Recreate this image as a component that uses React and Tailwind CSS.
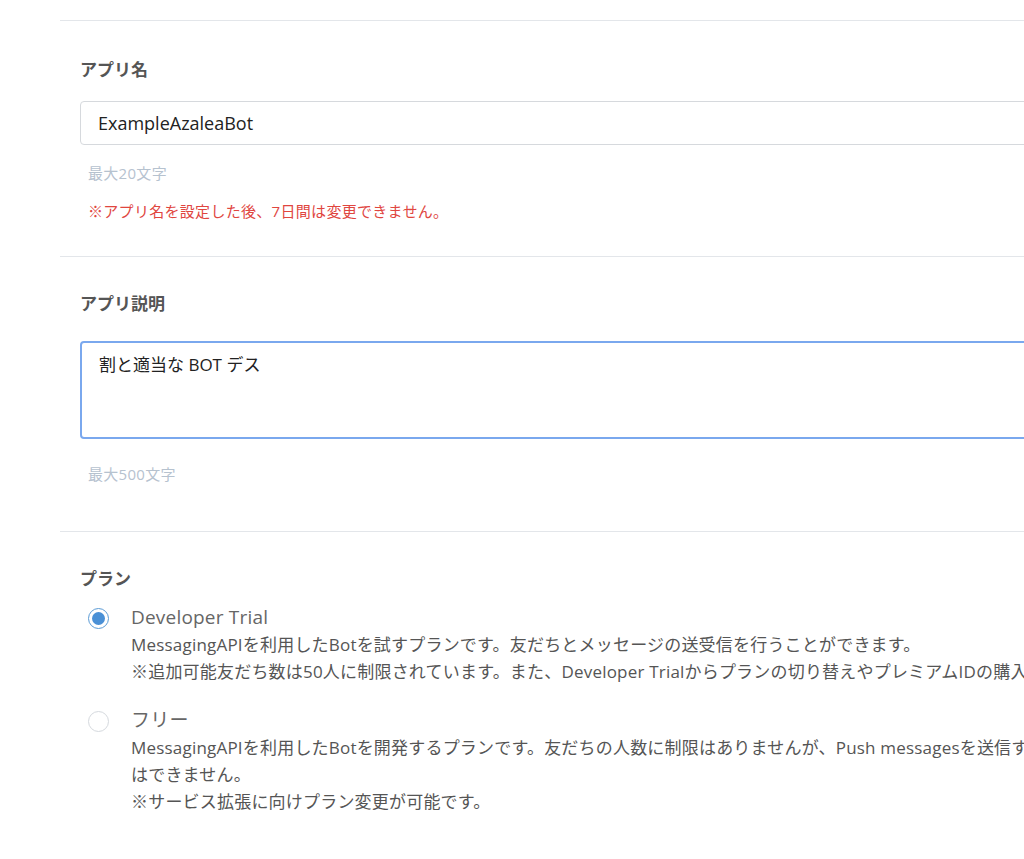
import React from 'react';

const font = { fontFamily: '"Open Sans", "Noto Sans CJK JP", sans-serif' };

const Radio = ({ checked }) => (
  <span
    className={`mt-[4px] w-[21px] h-[21px] shrink-0 rounded-full border flex items-center justify-center bg-white ${
      checked ? 'border-[#5b9bd5]' : 'border-[#d5d9de]'
    }`}
  >
    {checked && <span className="w-[13px] h-[13px] rounded-full bg-[#4a90d6]" />}
  </span>
);

export default function App() {
  return (
    <div className="w-[1024px] h-[859px] overflow-hidden bg-white" style={font}>
      <div className="ml-[60px] w-[1200px] pt-[20px]">
        <section className="border-t border-[#e3e6ea] pl-[20px] pt-[36px] pb-[34px]">
          <h3 className="text-[17px] font-bold text-[#555] leading-[26px]">アプリ名</h3>
          <div className="mt-[18px] h-[44px] rounded border border-[#d6d9dd] flex items-center px-[17px] text-[18px] text-[#222]">
            ExampleAzaleaBot
          </div>
          <p className="mt-[17px] pl-[8px] text-[15px] text-[#b6c2cf] leading-[22px] tracking-[0.3px]">最大20文字</p>
          <p className="mt-[16px] pl-[8px] text-[15px] text-[#e0463f] leading-[22px] tracking-[0.3px]">※アプリ名を設定した後、7日間は変更できません。</p>
        </section>
        <section className="border-t border-[#e3e6ea] pl-[20px] pt-[34px] pb-[46px]">
          <h3 className="text-[17px] font-bold text-[#555] leading-[26px]">アプリ説明</h3>
          <div className="mt-[24px] h-[98px] rounded border-2 border-[#7aa8ee] px-[17px] pt-[9px] text-[17px] text-[#222]">
            割と適当な BOT デス
          </div>
          <p className="mt-[24px] pl-[8px] text-[15px] text-[#b6c2cf] leading-[22px] tracking-[0.3px]">最大500文字</p>
        </section>
        <section className="border-t border-[#e3e6ea] pl-[20px] pt-[34px]">
          <h3 className="text-[17px] font-bold text-[#555] leading-[26px]">プラン</h3>
          <div className="mt-[12px] flex gap-[22px] pl-[8px]">
            <Radio checked />
            <div className="text-[17px] text-[#555] leading-[27px] tracking-[0.2px]">
              <div className="text-[19px] text-[#666]">Developer Trial</div>
              <div>MessagingAPIを利用したBotを試すプランです。友だちとメッセージの送受信を行うことができます。</div>
              <div className="whitespace-nowrap">※追加可能友だち数は50人に制限されています。また、Developer Trialからプランの切り替えやプレミアムIDの購入はできません。</div>
            </div>
          </div>
          <div className="mt-[22px] flex gap-[22px] pl-[8px]">
            <Radio />
            <div className="text-[17px] text-[#555] leading-[27px] tracking-[0.2px] w-[1080px]">
              <div className="text-[19px] text-[#666]">フリー</div>
              <div className="whitespace-nowrap">MessagingAPIを利用したBotを開発するプランです。友だちの人数に制限はありませんが、Push messagesを送信すること</div>
              <div>はできません。</div>
              <div>※サービス拡張に向けプラン変更が可能です。</div>
            </div>
          </div>
        </section>
      </div>
    </div>
  );
}
